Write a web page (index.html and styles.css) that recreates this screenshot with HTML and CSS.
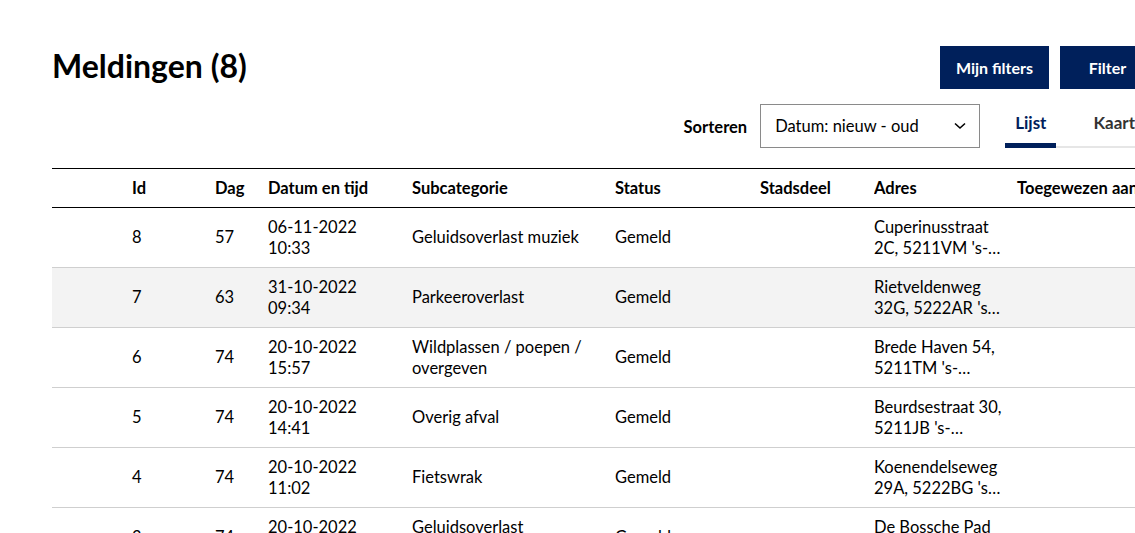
FILE: index.html
```html
<!DOCTYPE html>
<html lang="nl">
<head>
<meta charset="utf-8">
<title>Meldingen</title>
<link rel="stylesheet" href="styles.css">
</head>
<body>
<div class="page">
  <header class="top">
    <h1 class="title">Meldingen (8)</h1>
    <div class="controls">
      <div class="buttons">
        <button class="btn btn-mine">Mijn filters</button>
        <button class="btn btn-filter">Filter</button>
      </div>
      <div class="sortrow">
        <label class="sortlabel">Sorteren</label>
        <div class="select">
          <span>Datum: nieuw - oud</span>
          <svg class="chev" width="12" height="8" viewBox="0 0 12 8"><path d="M1 1.5 L6 6 L11 1.5" fill="none" stroke="#000" stroke-width="1.6"/></svg>
        </div>
        <div class="tabs">
          <div class="tab active">Lijst</div>
          <div class="tab tab-last">Kaart</div>
        </div>
      </div>
    </div>
  </header>

  <table class="list">
    <colgroup>
      <col class="c0"><col class="c1"><col class="c2"><col class="c3"><col class="c4"><col class="c5"><col class="c6"><col class="c7"><col class="c8">
    </colgroup>
    <thead>
      <tr>
        <th></th><th>Id</th><th>Dag</th><th class="pd">Datum en tijd</th><th>Subcategorie</th><th>Status</th><th>Stadsdeel</th><th>Adres</th><th>Toegewezen aan</th>
      </tr>
    </thead>
    <tbody>
      <tr>
        <td></td><td>8</td><td>57</td><td class="pd">06-11-2022 10:33</td><td>Geluidsoverlast muziek</td><td>Gemeld</td><td></td><td><div class="addr">Cuperinusstraat 2C, 5211VM 's-Hertogenbosch</div></td><td></td>
      </tr>
      <tr class="alt">
        <td></td><td>7</td><td>63</td><td class="pd">31-10-2022 09:34</td><td>Parkeeroverlast</td><td>Gemeld</td><td></td><td><div class="addr">Rietveldenweg 32G, 5222AR 's-Hertogenbosch</div></td><td></td>
      </tr>
      <tr>
        <td></td><td>6</td><td>74</td><td class="pd">20-10-2022 15:57</td><td>Wildplassen / poepen / overgeven</td><td>Gemeld</td><td></td><td><div class="addr">Brede Haven 54, 5211TM 's-Hertogenbosch</div></td><td></td>
      </tr>
      <tr>
        <td></td><td>5</td><td>74</td><td class="pd">20-10-2022 14:41</td><td>Overig afval</td><td>Gemeld</td><td></td><td><div class="addr">Beurdsestraat 30, 5211JB 's-Hertogenbosch</div></td><td></td>
      </tr>
      <tr>
        <td></td><td>4</td><td>74</td><td class="pd">20-10-2022 11:02</td><td>Fietswrak</td><td>Gemeld</td><td></td><td><div class="addr">Koenendelseweg 29A, 5222BG 's-Hertogenbosch</div></td><td></td>
      </tr>
      <tr>
        <td></td><td>3</td><td>74</td><td class="pd">20-10-2022 10:15</td><td>Geluidsoverlast installaties</td><td>Gemeld</td><td></td><td><div class="addr">De Bossche Pad 12, 5215AA 's-Hertogenbosch</div></td><td></td>
      </tr>
    </tbody>
  </table>
</div>
</body>
</html>
```

FILE: styles.css
```css
html, body {
  margin: 0;
  padding: 0;
  background: #fff;
  overflow: hidden;
}
body {
  font-family: Lato, "Noto Sans", sans-serif;
  color: #000;
  font-size: 16.5px;
}
.page {
  width: 1103px;
  margin-left: 52px;
  flex-shrink: 0;
}
.top {
  display: flex;
  justify-content: space-between;
  align-items: flex-start;
}
.title {
  margin: 46px 0 0 0;
  font-size: 32px;
  line-height: 40px;
  font-weight: 700;
}
.controls {
  display: flex;
  flex-direction: column;
  align-items: flex-end;
  padding-top: 46px;
}
.buttons {
  display: flex;
  gap: 11px;
}
.btn {
  height: 43px;
  border: 0;
  background: #00205b;
  color: #fff;
  font-family: Lato, "Noto Sans", sans-serif;
  font-weight: 700;
  font-size: 16px;
  padding: 0 16px;
}
.btn-filter {
  width: 95px;
}
.sortrow {
  display: flex;
  align-items: center;
  margin-top: 15px;
}
.sortlabel {
  font-weight: 700;
  font-size: 16.5px;
  margin-right: 13px;
  margin-top: 1px;
}
.select {
  box-sizing: border-box;
  width: 220px;
  height: 44px;
  border: 1px solid #8a8a8a;
  display: flex;
  align-items: center;
  justify-content: space-between;
  padding: 0 13px 0 14px;
  font-size: 16.5px;
}
.tabs {
  display: flex;
  height: 44px;
  margin-left: 25px;
  border-bottom: 2px solid #e6e6e6;
  box-sizing: border-box;
}
.tab {
  padding: 8px 10px 0 10px;
  line-height: 22px;
  font-weight: 700;
  font-size: 17px;
  color: #333;
  margin-right: 27px;
}
.tab-last {
  margin-right: 0;
  padding-right: 20px;
}
.tab.active {
  color: #00205b;
  border-bottom: 5px solid #00205b;
  margin-bottom: -2px;
}
.list {
  margin-top: 20px;
  width: 100%;
  border-collapse: collapse;
  table-layout: fixed;
}
.c0 { width: 80px; }
.c1 { width: 83px; }
.c2 { width: 53px; }
.c3 { width: 144px; }
.c4 { width: 203px; }
.c5 { width: 145px; }
.c6 { width: 114px; }
.c7 { width: 143px; }
.list th {
  text-align: left;
  font-weight: 700;
  height: 38px;
  padding: 0 12px 0 0;
  border-top: 1px solid #000;
  border-bottom: 1px solid #000;
  white-space: nowrap;
  overflow: hidden;
}
.list th:last-child {
  overflow: visible;
}
.list td {
  height: 59px;
  padding: 0 12px 0 0;
  line-height: 21px;
  border-bottom: 1px solid #cfcfcf;
  vertical-align: middle;
}
.list td.pd {
  padding-right: 30px;
}
.list tr.alt td {
  background: #f3f3f3;
}
.addr {
  display: -webkit-box;
  -webkit-line-clamp: 2;
  -webkit-box-orient: vertical;
  overflow: hidden;
}
```
